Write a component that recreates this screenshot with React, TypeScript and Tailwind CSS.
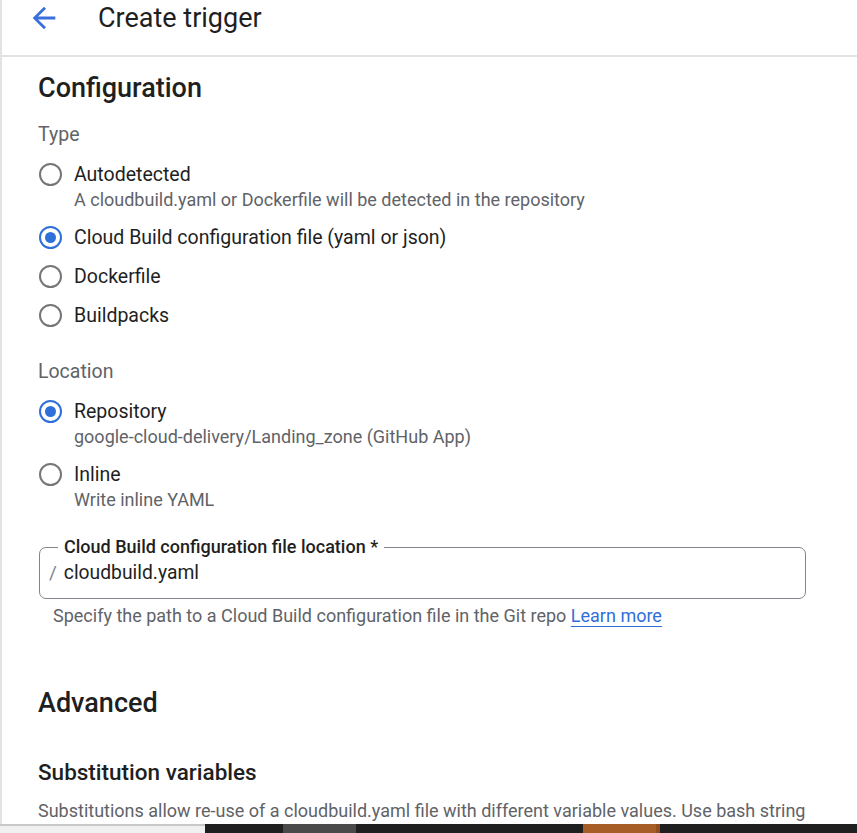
import React from 'react';

const font = { fontFamily: 'Roboto, "Liberation Sans", sans-serif' };

const Radio: React.FC<{ checked?: boolean; label: string; hint?: string }> = ({ checked, label, hint }) => (
  <div className="flex items-start">
    <div className="w-[24px] h-[39px] flex items-center justify-center shrink-0 ml-[36px]">
      <div className={`w-[23px] h-[23px] rounded-full border-[2.5px] flex items-center justify-center ${checked ? 'border-[#2f6fd9]' : 'border-[#747775]'}`}>
        {checked && <div className="w-[11px] h-[11px] rounded-full bg-[#2f6fd9]" />}
      </div>
    </div>
    <div className="ml-[12px] flex flex-col">
      <div className="h-[39px] flex items-center text-[19.5px] text-[#1f1f1f]">{label}</div>
      {hint && <div className="text-[18px] text-[#5f6368] -mt-[6px] mb-[6px] leading-[24px]">{hint}</div>}
    </div>
  </div>
);

const App: React.FC = () => {
  return (
    <div className="w-[857px] h-[833px] flex flex-col overflow-hidden bg-white" style={font}>
      <div className="flex-1 flex flex-col border-l-2 border-[#e3e3e3] overflow-hidden">
        <header className="h-[57px] shrink-0 flex items-start border-b-2 border-[#e3e3e3]">
          <button className="ml-[24px] w-[36px] h-[36px] flex items-center justify-center">
            <svg width="34" height="34" viewBox="0 0 24 24" fill="#3b6fdb">
              <path d="M20 11H7.83l5.59-5.59L12 4l-8 8 8 8 1.41-1.41L7.83 13H20v-2z" />
            </svg>
          </button>
          <h1 className="ml-[36px] text-[27px] text-[#1f1f1f] leading-[36px]">Create trigger</h1>
        </header>

        <main className="flex flex-col">
          <h2 className="ml-[36px] mt-[14px] text-[27px] font-medium text-[#1f1f1f] leading-[34px]">Configuration</h2>

          <div className="ml-[36px] mt-[18px] text-[19.5px] text-[#5f6368] leading-[24px]">Type</div>
          <div className="mt-[8px] flex flex-col">
            <Radio label="Autodetected" hint="A cloudbuild.yaml or Dockerfile will be detected in the repository" />
            <Radio checked label="Cloud Build configuration file (yaml or json)" />
            <Radio label="Dockerfile" />
            <Radio label="Buildpacks" />
          </div>

          <div className="ml-[36px] mt-[25px] text-[19.5px] text-[#5f6368] leading-[24px]">Location</div>
          <div className="mt-[8px] flex flex-col">
            <Radio checked label="Repository" hint="google-cloud-delivery/Landing_zone (GitHub App)" />
            <Radio label="Inline" hint="Write inline YAML" />
          </div>

          <div className="ml-[37px] mt-[29px] w-[767px] relative">
            <div className="h-[52px] border border-[#80868b] rounded-[7px] flex items-center">
              <span className="ml-[9px] text-[19px] text-[#80868b]">/</span>
              <span className="ml-[7px] text-[19.3px] text-[#1f1f1f]">cloudbuild.yaml</span>
            </div>
            <div className="absolute left-[19px] -top-[12px] px-[6px] bg-white text-[18px] font-medium text-[#1f1f1f] leading-[24px]">
              Cloud Build configuration file location *
            </div>
          </div>
          <div className="ml-[51px] mt-[5px] text-[18px] text-[#5f6368] leading-[24px]">
            Specify the path to a Cloud Build configuration file in the Git repo{' '}
            <a className="text-[#2f6fd9] underline underline-offset-[4px] decoration-1">Learn more</a>
          </div>

          <h2 className="ml-[36px] mt-[58px] text-[27px] font-medium text-[#1f1f1f] leading-[34px]">Advanced</h2>
          <h3 className="ml-[36px] mt-[38px] text-[22.5px] font-medium text-[#1f1f1f] leading-[28px]">Substitution variables</h3>
          <div className="ml-[36px] mt-[13px] text-[18px] text-[#5f6368] leading-[24px] whitespace-nowrap">
            Substitutions allow re-use of a cloudbuild.yaml file with different variable values. Use bash string
          </div>
        </main>
      </div>

      <div className="h-[9px] shrink-0 flex">
        <div className="w-[205px] bg-[#f0f0f0] border-t-2 border-[#c8c8c8]" />
        <div className="w-[78px] bg-[#1f1f1f]" />
        <div className="w-[73px] bg-[#4a4a4a]" />
        <div className="w-[227px] bg-[#1f1f1f]" />
        <div className="w-[73px] bg-[#a65e26]" />
        <div className="w-[4px] bg-[#8f4e1c]" />
        <div className="flex-1 bg-[#1f1f1f]" />
      </div>
    </div>
  );
};

export default App;
